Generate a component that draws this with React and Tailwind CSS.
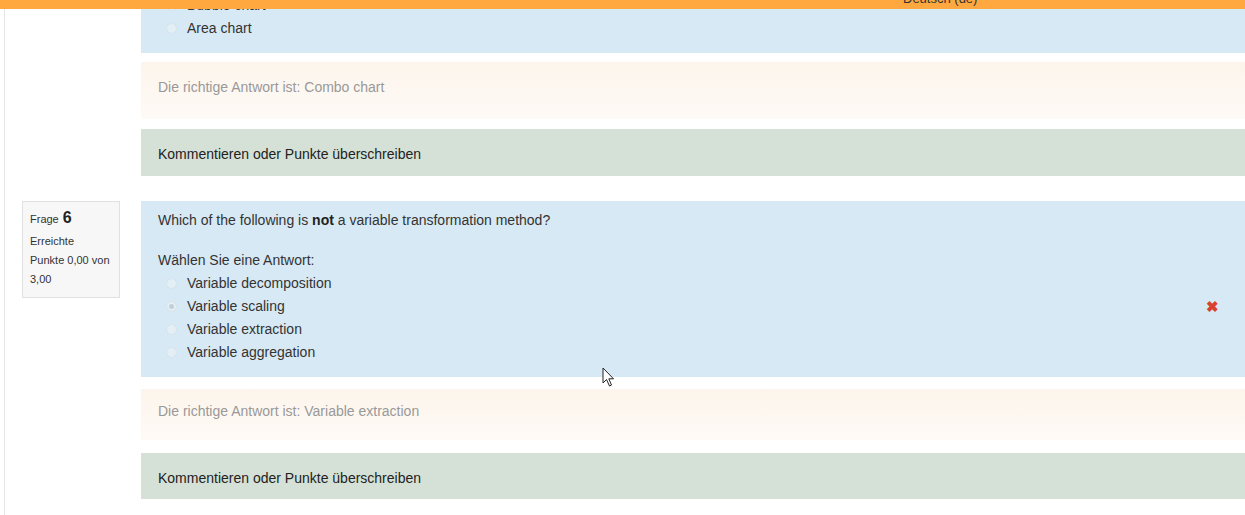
import React from "react";

function Radio({ checked }) {
  return (
    <span className="w-[11px] h-[11px] rounded-full border border-[#d6e3ec] bg-[#e4eef5] flex items-center justify-center">
      {checked && <span className="w-[5px] h-[5px] rounded-full bg-[#c3cfd8]" />}
    </span>
  );
}

function Option({ label, checked, wrong }) {
  return (
    <div className="h-[23px] flex items-center pl-[8px] pr-[26px]">
      <Radio checked={checked} />
      <span className="ml-[10px] text-[14px] text-[#333]">{label}</span>
      {wrong && <span className="ml-auto text-[#d9412f] text-[15px] font-bold leading-none">✖</span>}
    </div>
  );
}

function Outcome({ text, className }) {
  return (
    <div className={"bg-gradient-to-b from-[#fdf5ec] to-[#fefaf6] px-[17px] text-[14px] leading-[20px] text-[#999] " + className}>
      {text}
    </div>
  );
}

function Comment({ className }) {
  return (
    <div className={"bg-[#d5e1d6] px-[17px] flex items-center text-[14px] text-[#222] " + className}>
      Kommentieren oder Punkte überschreiben
    </div>
  );
}

export default function App() {
  return (
    <div className="relative w-[1245px] h-[515px] overflow-hidden bg-white" style={{ fontFamily: '"Liberation Sans", Arial, sans-serif' }}>
      {/* top nav bar */}
      <div className="absolute top-0 left-0 right-0 h-[9px] bg-[#ffa83f] z-10 overflow-hidden">
        <span className="absolute left-[903px] top-[-11px] text-[13px] text-[#333]">Deutsch (de)</span>
      </div>

      <div className="ml-[4px] border-l border-[#e6e6e6] h-full">
        {/* previous question tail */}
        <div className="flex">
          <div className="w-[136px] shrink-0" />
          <div className="flex-1">
            <div className="bg-[#d7e9f4] h-[53px] overflow-hidden">
              <div className="-mt-[6px] pl-[17px]">
                <Option label="Bubble chart" />
                <Option label="Area chart" />
              </div>
            </div>
            <Outcome text="Die richtige Antwort ist: Combo chart" className="mt-[9px] h-[57px] pt-[15px]" />
            <Comment className="mt-[10px] h-[47px] pt-[3px]" />
          </div>
        </div>

        {/* question 6 */}
        <div className="flex mt-[25px]">
          <div className="w-[136px] shrink-0 pl-[17px]">
            <div className="w-[98px] h-[97px] bg-[#f7f7f7] border border-[#e1e1e1] pl-[7px] pt-[6px] text-[11px] leading-[19px] text-[#333] whitespace-nowrap">
              <div className="flex items-baseline">
                <span>Frage</span>
                <span className="ml-[4px] text-[16px] font-bold text-[#222]">6</span>
              </div>
              <div className="mt-[3px]">Erreichte</div>
              <div>Punkte 0,00 von</div>
              <div>3,00</div>
            </div>
          </div>
          <div className="flex-1">
            <div className="bg-[#d7e9f4] h-[176px] pt-[10px]">
              <div className="px-[17px] text-[14px] leading-[19px] text-[#333]">
                Which of the following is <b className="text-[#222]">not</b> a variable transformation method?
              </div>
              <div className="px-[17px] mt-[21px] text-[14px] leading-[19px] text-[#333]">Wählen Sie eine Antwort:</div>
              <div className="pl-[17px] pt-[2px]">
                <Option label="Variable decomposition" />
                <Option label="Variable scaling" checked wrong />
                <Option label="Variable extraction" />
                <Option label="Variable aggregation" />
              </div>
            </div>
            <Outcome text="Die richtige Antwort ist: Variable extraction" className="mt-[12px] h-[51px] pt-[12px]" />
            <Comment className="mt-[13px] h-[46px] pt-[5px]" />
          </div>
        </div>
      </div>

      {/* mouse cursor */}
      <svg className="absolute left-[602px] top-[367px]" width="14" height="21" viewBox="0 0 14 21">
        <path d="M1 1 L1 16 L4.5 12.5 L7.5 19 L9.5 18 L6.8 11.8 L11.5 11.8 Z" fill="#fff" stroke="#222" strokeWidth="1" strokeLinejoin="round" />
      </svg>
    </div>
  );
}
